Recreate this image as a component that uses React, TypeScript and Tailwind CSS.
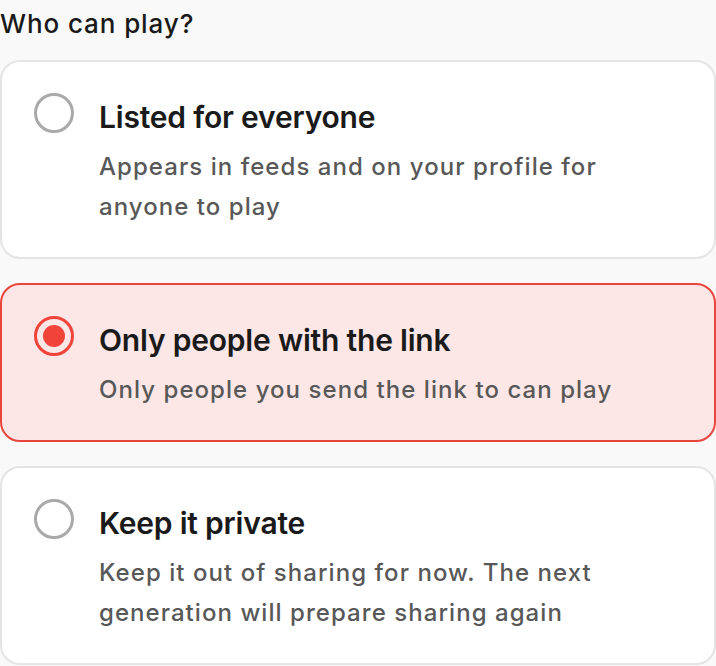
import { useState } from 'react';

type Option = {
  id: string;
  title: string;
  description: string;
};

const options: Option[] = [
  {
    id: 'public',
    title: 'Listed for everyone',
    description: 'Appears in feeds and on your profile for anyone to play',
  },
  {
    id: 'link',
    title: 'Only people with the link',
    description: 'Only people you send the link to can play',
  },
  {
    id: 'private',
    title: 'Keep it private',
    description: 'Keep it out of sharing for now. The next generation will prepare sharing again',
  },
];

function Radio({ checked }: { checked: boolean }) {
  if (checked) {
    return (
      <span className="mt-[-6px] flex h-10 w-10 shrink-0 items-center justify-center rounded-full border-[3.5px] border-[#f0433a]">
        <span className="h-[22px] w-[22px] rounded-full bg-[#f0433a]" />
      </span>
    );
  }
  return <span className="mt-[-6px] h-10 w-10 shrink-0 rounded-full border-[3.5px] border-[#a9a9a9]" />;
}

export default function App() {
  const [selected, setSelected] = useState('link');

  return (
    <div className="min-h-[666px] w-[716px] bg-[#f9f9f9] font-['Inter',sans-serif]">
      <h2 className="pt-[6px] text-[26px] font-medium leading-[36px] tracking-[0.9px] text-[#1a1a1a]">Who can play?</h2>

      <div className="mt-[18px] flex flex-col gap-[24px]">
        {options.map((opt) => {
          const active = selected === opt.id;
          return (
            <button
              key={opt.id}
              onClick={() => setSelected(opt.id)}
              className={
                active
                  ? 'flex w-full items-start gap-[25px] rounded-[20px] border-2 border-[#e8453c] bg-[#fce6e6] pb-[30px] pl-[32px] pr-6 pt-[37px] text-left'
                  : 'flex w-full items-start gap-[25px] rounded-[20px] border-2 border-[#e4e4e4] bg-white pb-[30px] pl-[32px] pr-6 pt-[37px] text-left'
              }
            >
              <Radio checked={active} />
              <div className="min-w-0 flex-1">
                <div className="text-[30px] font-semibold leading-[36px] tracking-[-0.2px] text-[#1a1a1a]">{opt.title}</div>
                <p className="mt-[12px] max-w-[540px] text-[24px] font-medium leading-[40px] tracking-[1.05px] text-[#585858]">
                  {opt.description}
                </p>
              </div>
            </button>
          );
        })}
      </div>
    </div>
  );
}
